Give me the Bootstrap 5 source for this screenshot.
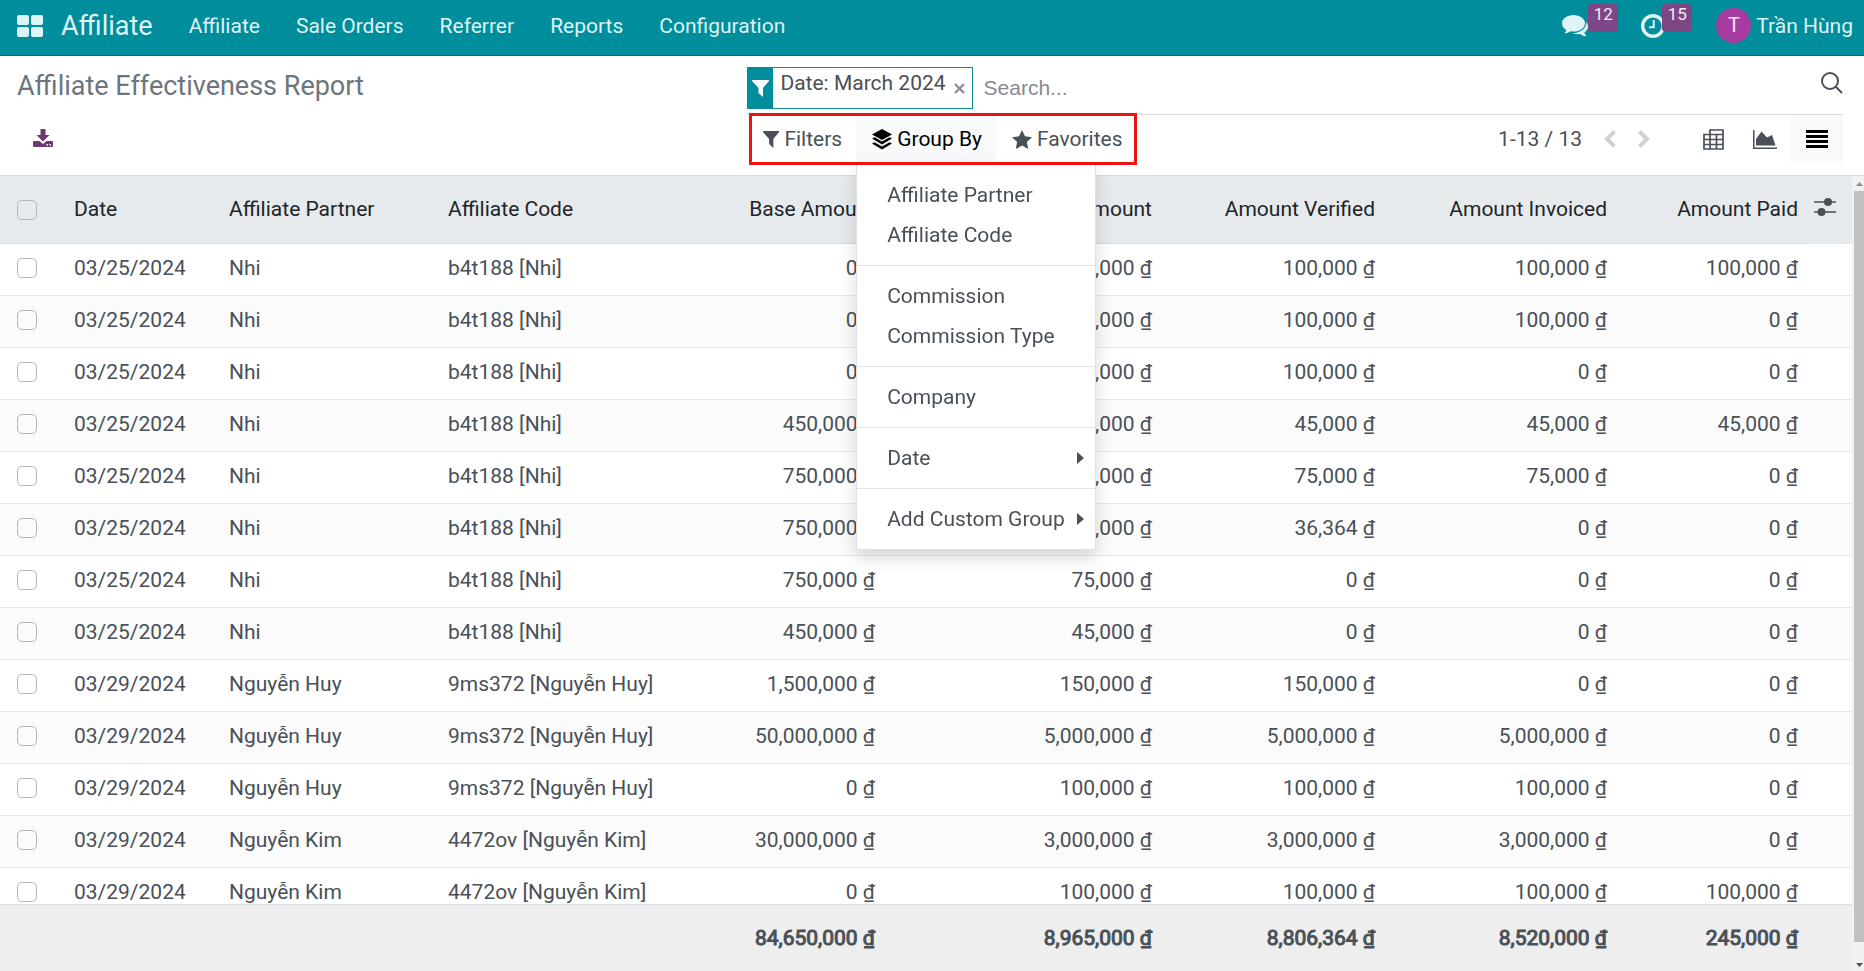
<!DOCTYPE html>
<html lang="en">
<head>
<meta charset="utf-8">
<meta name="viewport" content="width=device-width, initial-scale=1">
<title>Affiliate Effectiveness Report</title>
<link href="https://cdn.jsdelivr.net/npm/bootstrap@5.3.0/dist/css/bootstrap.min.css" rel="stylesheet">
<style>
  :root { --teal: #008d9c; --ink: #495057; --line: #dee2e6; }
  body { font-family: Roboto, "Liberation Sans", sans-serif; font-size: 21px; line-height: 32px; color: var(--ink); background: #fff; }
  svg { display: block; flex: none; }
  button { font-size: 21px; color: var(--ink); }

  .topbar { height: 56px; background: var(--teal); border-bottom: 1px solid #00696f; padding: 0 11px 4px 17px; color: #def4f5; }
  .topbar a { color: inherit; text-decoration: none; }
  .topbar .brand { font-size: 27px; margin: 0 18px; }
  .topbar .menu-link { padding: 0 18px; }
  .tray { position: relative; padding: 0; border: 0; background: none; color: inherit; height: 52px; }
  .counter { position: absolute; top: 4px; left: 100%; width: 30px; height: 28px; border-radius: 4px; background: #7d4685; font-size: 17px; line-height: 21px; color: #f3e9f4; text-align: center; }
  .tray-chat { width: 26px; margin-right: 53px; }
  .tray-clock { width: 21px; margin-right: 54px; }
  .avatar { width: 35px; height: 35px; background: #a83ba2; color: #f6e6f5; font-size: 20px; line-height: 35px; text-align: center; margin-right: 5px; }

  .controls { padding: 0 21px 12px 17px; border-bottom: 1px solid #d9dcdf; }
  .controls-left { flex: 0 0 40%; }
  .controls h1 { font-size: 27px; line-height: 36px; font-weight: 400; color: #6c757d; margin: 12px 0 0; }
  .download { margin: 25px 0 0 16px; color: #6b3a70; }
  .searchbar { height: 59px; border-bottom: 1px solid #d5d9dd; padding-top: 11px; }
  .facet { height: 42px; border: 1px solid #0c8a91; }
  .facet-icon { width: 25px; background: var(--teal); color: #fff; }
  .facet-text { padding: 0 6px 0 7px; line-height: 30px; }
  .facet-close { width: 15px; margin-right: 5px; color: #8b9095; }
  .search-input { border: 0; outline: 0; height: 42px; padding: 0 11px; font-family: "Liberation Sans", sans-serif; font-size: 21px; color: var(--ink); background: none; }
  .search-input::placeholder { color: #868b90; }
  .search-btn { margin-top: 5px; }
  .tool { height: 48px; border: 0; border-radius: 0; background: none; padding: 0 14px 0 16px; gap: 5px; line-height: 32px; }
  .tool.on { background: #f8f9fa; color: #000; }
  .highlight { position: absolute; inset: -2px 0 -2px 2px; border: 3px solid #ee1111; z-index: 1100; pointer-events: none; }
  .view-btn { width: 52px; height: 48px; border: 0; background: none; padding: 0; }
  .view-btn.on { background: #f8f9fa; color: #000; }
  .pager-btn { border: 0; background: none; padding: 0; margin-left: 22px; color: #ced2d5; }
  .views { margin-left: 37px; }

  .group-menu { top: 100%; left: 0; width: 240px; margin: 0; padding: 11px 0 10px; border: 1px solid var(--line); border-radius: 0; font-size: 21px; box-shadow: 0 8px 16px rgba(0,0,0,.15); }
  .group-menu .dropdown-item { height: 40px; padding: 0 11px 0 30px; line-height: 40px; color: var(--ink); }
  .group-menu .dropdown-divider { margin: 10px 0; border-top: 1px solid var(--line); opacity: 1; }

  .report { overflow-y: auto; scrollbar-width: none; }
  .report::-webkit-scrollbar { display: none; }
  .report table { table-layout: fixed; width: 100%; border-collapse: separate; border-spacing: 0; }
  .report th, .report td { padding: 8px; white-space: nowrap; }
  .report thead th { position: sticky; top: 0; height: 68px; padding-bottom: 10px; background: #e7eaed; color: #212529; font-weight: 400; border-bottom: 1px solid #d5d9dd; vertical-align: middle; z-index: 2; }
  .report thead th:first-child { padding-bottom: 8px; }
  .report tbody td { height: 52px; padding: 8px 8px 11px; border-bottom: 1px solid #e6e8ea; }
  .report tbody tr:nth-child(even) { background: #fbfbfb; }
  .report tfoot td { position: sticky; bottom: 0; height: 67px; background: #eee; border-top: 1px solid #dcdfe2; -webkit-text-stroke: 1px var(--ink); }
  .report th:nth-child(n+5), .report td:nth-child(n+5) { text-align: right; }
  .report th:first-child, .report td:first-child { padding-left: 17px; }
  .report thead th:last-child { border-bottom-color: #e7eaed; text-align: left; }
  .report .form-check-input { display: block; width: 20px; height: 20px; margin: 0; border: 1px solid #b3b6ba; border-radius: 5px; background-color: transparent; }
  .w-pick { width: 66px; } .w-date { width: 155px; } .w-partner { width: 219px; } .w-code { width: 250px; }
  .w-base { width: 193px; } .w-comm { width: 277px; } .w-ver { width: 223px; } .w-inv { width: 232px; }
  .w-paid { width: 191px; } .w-opt { width: 46px; }
  .rail { width: 12px; background: #f1f1f1; padding-left: 2px; }
  .rail-arrow { height: 15px; }
  .rail-end { height: 29px; }
  .rail-thumb { background: #c1c1c1; }
</style>
</head>
<body class="vh-100 d-flex flex-column overflow-hidden">

<nav class="topbar d-flex align-items-center flex-shrink-0">
  <a href="#" aria-label="Apps">
    <svg width="26" height="22" viewBox="0 0 26 22" fill="currentColor"><rect width="12" height="10" rx="2"/><rect x="14" width="12" height="10" rx="2"/><rect y="12" width="12" height="10" rx="2"/><rect x="14" y="12" width="12" height="10" rx="2"/></svg>
  </a>
  <a href="#" class="brand">Affiliate</a>
  <a href="#" class="menu-link">Affiliate</a>
  <a href="#" class="menu-link">Sale Orders</a>
  <a href="#" class="menu-link">Referrer</a>
  <a href="#" class="menu-link">Reports</a>
  <a href="#" class="menu-link">Configuration</a>
  <button type="button" class="tray tray-chat ms-auto" aria-label="Messages">
    <svg width="26" height="22" viewBox="0 0 26 22" fill="currentColor"><path d="M11.500 0C17.900 0 23 3.700 23 8.300s-5.100 8.300-11.500 8.300c-1 0-2-.1-2.900-.3-1.800 1.300-3.900 2-6.200 2.100.9-.9 1.600-2 1.900-3.300C1.700 13.600 0 11.100 0 8.300 0 3.700 5.100 0 11.500 0z"/><path d="M24.300 7c1.100 1.300 1.700 2.800 1.700 4.400 0 2.400-1.400 4.600-3.600 6 .3 1.400 1.200 2.700 2.400 3.900-2.500-.1-4.800-.9-6.700-2.400-2.700.5-5.500.2-7.800-.8C18 18.300 24.600 13.700 24.300 7z"/></svg>
    <span class="counter">12</span>
  </button>
  <button type="button" class="tray tray-clock" aria-label="Activities">
    <svg width="24" height="24" viewBox="0 0 24 24" fill="none" stroke="currentColor"><circle cx="12" cy="12" r="10.300" stroke-width="3.400"/><path d="M12.700 6v7.200H8" stroke-width="2"/></svg>
    <span class="counter">15</span>
  </button>
  <a href="#" class="d-flex align-items-center">
    <span class="avatar rounded-circle">T</span>
    <span>Trần Hùng</span>
  </a>
</nav>

<header class="controls d-flex flex-shrink-0">
  <div class="controls-left">
    <h1>Affiliate Effectiveness Report</h1>
    <button type="button" class="download border-0 bg-transparent p-0" aria-label="Export">
      <svg width="20" height="18" viewBox="0 0 20 18" fill="currentColor"><path d="M7.500 0h5v6h4L10 12.500 3.500 6h4z"/><path fill-rule="evenodd" d="M1 12h5.500l3.500 3 3.500-3H19q1 0 1 1v4q0 1-1 1H1q-1 0-1-1v-4q0-1 1-1zm12.500 3v1.500H15V15zm3 0v1.500H18V15z"/></svg>
    </button>
  </div>
  <div class="flex-fill">
    <div class="searchbar d-flex align-items-start">
      <div class="facet d-flex">
        <span class="facet-icon d-flex align-items-center justify-content-center">
          <svg width="17" height="17" viewBox="0 0 17 17" fill="currentColor"><path d="M0 0h17v1l-6 7v9L6.500 13V8L0 1z"/></svg>
        </span>
        <span class="facet-text">Date: March 2024</span>
        <button type="button" class="facet-close border-0 bg-transparent p-0 d-flex align-items-center justify-content-center" aria-label="Remove">
          <svg width="11" height="11" viewBox="0 0 11 11" stroke="currentColor" stroke-width="2.400"><path d="M1 1l9 9M10 1l-9 9"/></svg>
        </button>
      </div>
      <input class="search-input flex-fill" type="text" placeholder="Search..." aria-label="Search">
      <button type="button" class="search-btn border-0 bg-transparent p-0" aria-label="Search">
        <svg width="22" height="22" viewBox="0 0 22 22" fill="none" stroke="currentColor" stroke-width="2"><circle cx="9" cy="9" r="8"/><path d="M14.500 14.500l6.500 6.500"/></svg>
      </button>
    </div>
    <div class="d-flex align-items-center">
      <div class="position-relative d-flex">
        <button type="button" class="tool d-flex align-items-center">
          <svg width="16" height="17" viewBox="0 0 17 17" preserveAspectRatio="none" fill="currentColor"><path d="M0 0h17v1l-6 7v9L6.500 13V8L0 1z"/></svg>Filters</button>
        <div class="dropdown">
          <button type="button" class="tool on d-flex align-items-center" aria-expanded="true">
            <svg width="20" height="21" viewBox="0 0 20 21" fill="currentColor"><path d="M10 0l10 5.500L10 11 0 5.500z"/><path d="M0 9.500l2.500-1.300L10 12.400l7.500-4.200L20 9.500 10 15.500z"/><path d="M0 14.500l2.500-1.300L10 17.400l7.500-4.200 2.500 1.300-10 6z"/></svg>Group By</button>
          <div class="dropdown-menu group-menu show">
            <a class="dropdown-item" href="#">Affiliate Partner</a>
            <a class="dropdown-item" href="#">Affiliate Code</a>
            <hr class="dropdown-divider">
            <a class="dropdown-item" href="#">Commission</a>
            <a class="dropdown-item" href="#">Commission Type</a>
            <hr class="dropdown-divider">
            <a class="dropdown-item" href="#">Company</a>
            <hr class="dropdown-divider">
            <a class="dropdown-item d-flex align-items-center justify-content-between" href="#">Date
              <svg width="7" height="12" viewBox="0 0 7 12" fill="currentColor"><path d="M0 0l7 6-7 6z"/></svg></a>
            <hr class="dropdown-divider">
            <a class="dropdown-item d-flex align-items-center justify-content-between" href="#">Add Custom Group
              <svg width="7" height="12" viewBox="0 0 7 12" fill="currentColor"><path d="M0 0l7 6-7 6z"/></svg></a>
          </div>
        </div>
        <button type="button" class="tool d-flex align-items-center">
          <svg width="20" height="19" viewBox="0 0 20 19" fill="currentColor"><path d="M10 0l3 6.300 7 .9-5.100 4.700L16.200 19 10 15.500 3.800 19l1.300-7.100L0 7.200l7-.9z"/></svg>Favorites</button>
        <div class="highlight"></div>
      </div>
      <span class="ms-auto">1-13 / 13</span>
      <button type="button" class="pager-btn" aria-label="Previous"><svg width="12" height="18" viewBox="0 0 12 18" fill="none" stroke="currentColor" stroke-width="4"><path d="M10.500 1.500L3 9l7.500 7.500"/></svg></button>
      <button type="button" class="pager-btn" aria-label="Next"><svg width="12" height="18" viewBox="0 0 12 18" fill="none" stroke="currentColor" stroke-width="4"><path d="M1.500 1.500L9 9l-7.500 7.500"/></svg></button>
      <div class="views d-flex">
        <button type="button" class="view-btn d-flex align-items-center justify-content-center" aria-label="Pivot">
          <svg width="21" height="21" viewBox="0 0 21 21" fill="none" stroke="currentColor" stroke-width="1.700"><path d="M7 5.500V1h13v19H1V5.500h19M1 10.500h19M1 15.500h19M7 5.500V20M13.500 5.500V20"/></svg></button>
        <button type="button" class="view-btn d-flex align-items-center justify-content-center" aria-label="Graph">
          <svg width="24" height="19" viewBox="0 0 24 19"><path d="M.75 0v18.200H24" fill="none" stroke="currentColor" stroke-width="1.500"/><path d="M3 15.500V9l5.500-7.500 5.500 6L19 5l3.500 10.500z" fill="currentColor"/></svg></button>
        <button type="button" class="view-btn on d-flex align-items-center justify-content-center" aria-label="List">
          <svg width="22" height="18" viewBox="0 0 22 18" fill="currentColor"><path d="M0 0h22v3H0zM0 5h22v3H0zM0 10h22v3H0zM0 15h22v3H0z"/></svg></button>
      </div>
    </div>
  </div>
</header>

<main class="d-flex flex-fill overflow-hidden">
  <div class="report flex-fill">
    <table>
      <colgroup><col class="w-pick"><col class="w-date"><col class="w-partner"><col class="w-code"><col class="w-base"><col class="w-comm"><col class="w-ver"><col class="w-inv"><col class="w-paid"><col class="w-opt"></colgroup>
      <thead>
        <tr><th><input class="form-check-input" type="checkbox" aria-label="Select all"></th><th>Date</th><th>Affiliate Partner</th><th>Affiliate Code</th><th>Base Amount</th><th>Commission Amount</th><th>Amount Verified</th><th>Amount Invoiced</th><th>Amount Paid</th>
          <th><button type="button" class="border-0 bg-transparent p-0" aria-label="Optional columns"><svg width="22" height="18" viewBox="0 0 22 18" fill="currentColor"><path d="M0 3.200h22v1.600H0zM0 13.200h22v1.600H0z"/><circle cx="14" cy="4" r="4"/><circle cx="7.500" cy="14" r="4"/></svg></button></th></tr>
      </thead>
      <tbody>
        <tr><td><input class="form-check-input" type="checkbox" aria-label="Select row 1"></td><td>03/25/2024</td><td>Nhi</td><td>b4t188 [Nhi]</td><td>0 ₫</td><td>100,000 ₫</td><td>100,000 ₫</td><td>100,000 ₫</td><td>100,000 ₫</td><td></td></tr>
        <tr><td><input class="form-check-input" type="checkbox" aria-label="Select row 2"></td><td>03/25/2024</td><td>Nhi</td><td>b4t188 [Nhi]</td><td>0 ₫</td><td>100,000 ₫</td><td>100,000 ₫</td><td>100,000 ₫</td><td>0 ₫</td><td></td></tr>
        <tr><td><input class="form-check-input" type="checkbox" aria-label="Select row 3"></td><td>03/25/2024</td><td>Nhi</td><td>b4t188 [Nhi]</td><td>0 ₫</td><td>100,000 ₫</td><td>100,000 ₫</td><td>0 ₫</td><td>0 ₫</td><td></td></tr>
        <tr><td><input class="form-check-input" type="checkbox" aria-label="Select row 4"></td><td>03/25/2024</td><td>Nhi</td><td>b4t188 [Nhi]</td><td>450,000 ₫</td><td>45,000 ₫</td><td>45,000 ₫</td><td>45,000 ₫</td><td>45,000 ₫</td><td></td></tr>
        <tr><td><input class="form-check-input" type="checkbox" aria-label="Select row 5"></td><td>03/25/2024</td><td>Nhi</td><td>b4t188 [Nhi]</td><td>750,000 ₫</td><td>75,000 ₫</td><td>75,000 ₫</td><td>75,000 ₫</td><td>0 ₫</td><td></td></tr>
        <tr><td><input class="form-check-input" type="checkbox" aria-label="Select row 6"></td><td>03/25/2024</td><td>Nhi</td><td>b4t188 [Nhi]</td><td>750,000 ₫</td><td>75,000 ₫</td><td>36,364 ₫</td><td>0 ₫</td><td>0 ₫</td><td></td></tr>
        <tr><td><input class="form-check-input" type="checkbox" aria-label="Select row 7"></td><td>03/25/2024</td><td>Nhi</td><td>b4t188 [Nhi]</td><td>750,000 ₫</td><td>75,000 ₫</td><td>0 ₫</td><td>0 ₫</td><td>0 ₫</td><td></td></tr>
        <tr><td><input class="form-check-input" type="checkbox" aria-label="Select row 8"></td><td>03/25/2024</td><td>Nhi</td><td>b4t188 [Nhi]</td><td>450,000 ₫</td><td>45,000 ₫</td><td>0 ₫</td><td>0 ₫</td><td>0 ₫</td><td></td></tr>
        <tr><td><input class="form-check-input" type="checkbox" aria-label="Select row 9"></td><td>03/29/2024</td><td>Nguyễn Huy</td><td>9ms372 [Nguyễn Huy]</td><td>1,500,000 ₫</td><td>150,000 ₫</td><td>150,000 ₫</td><td>0 ₫</td><td>0 ₫</td><td></td></tr>
        <tr><td><input class="form-check-input" type="checkbox" aria-label="Select row 10"></td><td>03/29/2024</td><td>Nguyễn Huy</td><td>9ms372 [Nguyễn Huy]</td><td>50,000,000 ₫</td><td>5,000,000 ₫</td><td>5,000,000 ₫</td><td>5,000,000 ₫</td><td>0 ₫</td><td></td></tr>
        <tr><td><input class="form-check-input" type="checkbox" aria-label="Select row 11"></td><td>03/29/2024</td><td>Nguyễn Huy</td><td>9ms372 [Nguyễn Huy]</td><td>0 ₫</td><td>100,000 ₫</td><td>100,000 ₫</td><td>100,000 ₫</td><td>0 ₫</td><td></td></tr>
        <tr><td><input class="form-check-input" type="checkbox" aria-label="Select row 12"></td><td>03/29/2024</td><td>Nguyễn Kim</td><td>4472ov [Nguyễn Kim]</td><td>30,000,000 ₫</td><td>3,000,000 ₫</td><td>3,000,000 ₫</td><td>3,000,000 ₫</td><td>0 ₫</td><td></td></tr>
        <tr><td><input class="form-check-input" type="checkbox" aria-label="Select row 13"></td><td>03/29/2024</td><td>Nguyễn Kim</td><td>4472ov [Nguyễn Kim]</td><td>0 ₫</td><td>100,000 ₫</td><td>100,000 ₫</td><td>100,000 ₫</td><td>100,000 ₫</td><td></td></tr>
      </tbody>
      <tfoot>
        <tr><td></td><td></td><td></td><td></td><td>84,650,000 ₫</td><td>8,965,000 ₫</td><td>8,806,364 ₫</td><td>8,520,000 ₫</td><td>245,000 ₫</td><td></td></tr>
      </tfoot>
    </table>
  </div>
  <div class="rail d-flex flex-column flex-shrink-0" aria-hidden="true">
    <div class="rail-arrow d-flex align-items-center justify-content-center"><svg width="7" height="4" viewBox="0 0 7 4"><path d="M0 4l3.500-4L7 4z" fill="#8f8f8f"/></svg></div>
    <div class="rail-thumb flex-fill"></div>
    <div class="rail-end d-flex align-items-end justify-content-center pb-1"><svg width="7" height="4" viewBox="0 0 7 4"><path d="M0 0l3.500 4L7 0z" fill="#505050"/></svg></div>
  </div>
</main>

<script src="https://cdn.jsdelivr.net/npm/bootstrap@5.3.0/dist/js/bootstrap.bundle.min.js"></script>
</body>
</html>
